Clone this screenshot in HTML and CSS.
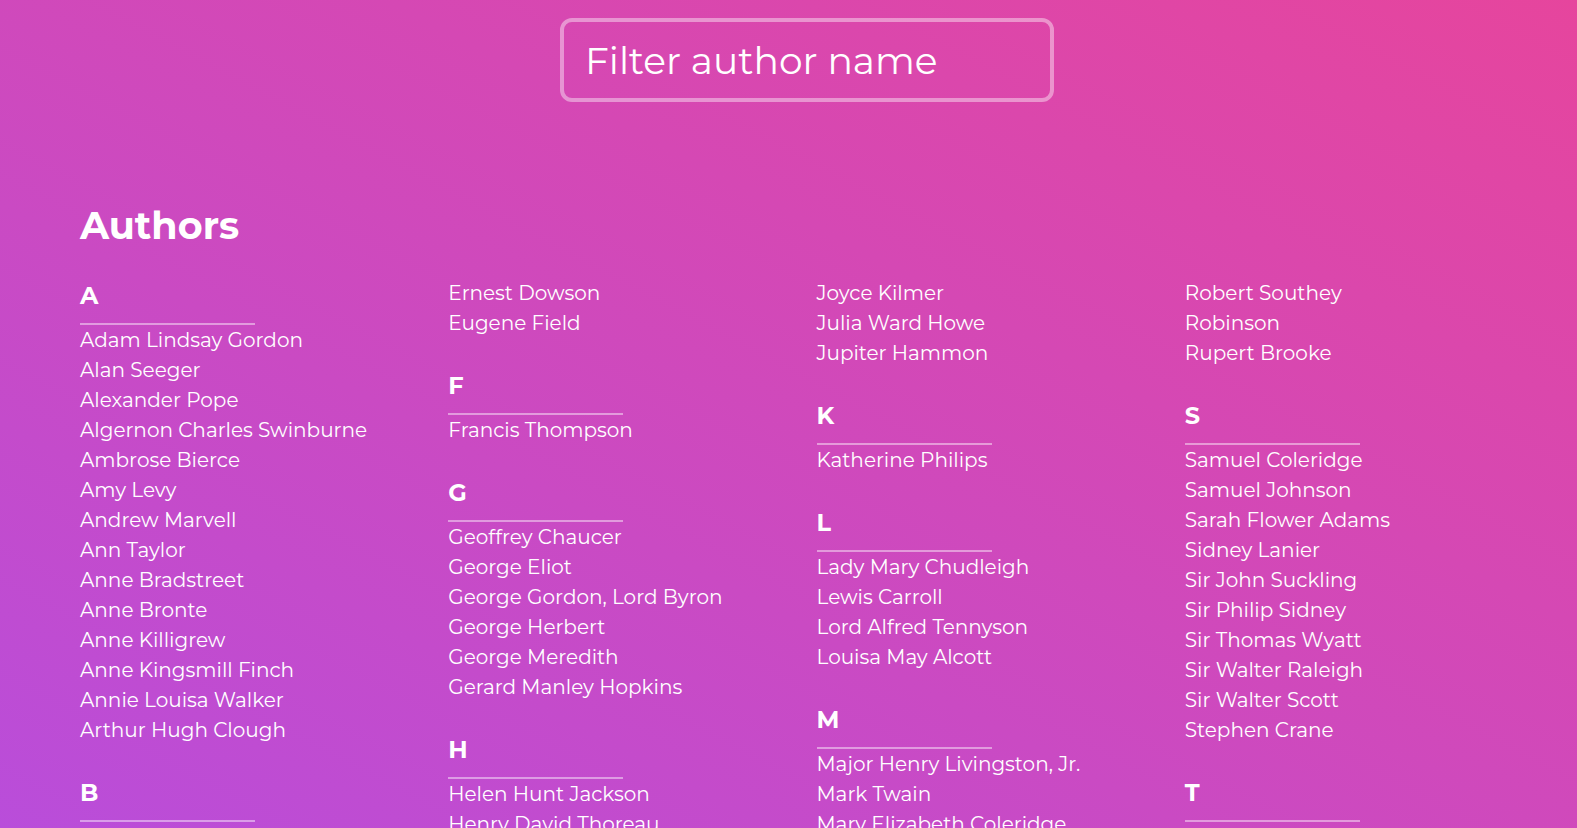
FILE: index.html
```html
<!DOCTYPE html>
<html lang="en">
<head>
<meta charset="utf-8">
<title>Authors</title>
<link rel="stylesheet" href="styles.css">
</head>
<body>
<header class="search">
  <input class="search-input" type="text" placeholder="Filter author name">
</header>
<main class="authors">
  <h1 class="authors-title">Authors</h1>
  <div class="columns">
    <div class="col">
      <section class="group">
        <h2 class="letter">A</h2>
        <ul class="names">
          <li>Adam Lindsay Gordon</li>
          <li>Alan Seeger</li>
          <li>Alexander Pope</li>
          <li>Algernon Charles Swinburne</li>
          <li>Ambrose Bierce</li>
          <li>Amy Levy</li>
          <li>Andrew Marvell</li>
          <li>Ann Taylor</li>
          <li>Anne Bradstreet</li>
          <li>Anne Bronte</li>
          <li>Anne Killigrew</li>
          <li>Anne Kingsmill Finch</li>
          <li>Annie Louisa Walker</li>
          <li>Arthur Hugh Clough</li>
        </ul>
      </section>
      <section class="group">
        <h2 class="letter">B</h2>
        <ul class="names">
          <li>Ben Jonson</li>
          <li>Bret Harte</li>
        </ul>
      </section>
      <section class="group">
        <h2 class="letter">C</h2>
        <ul class="names">
          <li>Charles Kingsley</li>
          <li>Christina Rossetti</li>
        </ul>
      </section>
      <section class="group">
        <h2 class="letter">E</h2>
        <ul class="names">
          <li>Edgar Allan Poe</li>
          <li>Emily Dickinson</li>
        </ul>
      </section>
    </div>
    <div class="col">
      <section class="group">
        <ul class="names">
          <li>Ernest Dowson</li>
          <li>Eugene Field</li>
        </ul>
      </section>
      <section class="group">
        <h2 class="letter">F</h2>
        <ul class="names">
          <li>Francis Thompson</li>
        </ul>
      </section>
      <section class="group">
        <h2 class="letter">G</h2>
        <ul class="names">
          <li>Geoffrey Chaucer</li>
          <li>George Eliot</li>
          <li>George Gordon, Lord Byron</li>
          <li>George Herbert</li>
          <li>George Meredith</li>
          <li>Gerard Manley Hopkins</li>
        </ul>
      </section>
      <section class="group">
        <h2 class="letter">H</h2>
        <ul class="names">
          <li>Helen Hunt Jackson</li>
          <li>Henry David Thoreau</li>
          <li>Henry Wadsworth Longfellow</li>
        </ul>
      </section>
    </div>
    <div class="col">
      <section class="group">
        <ul class="names">
          <li>Joyce Kilmer</li>
          <li>Julia Ward Howe</li>
          <li>Jupiter Hammon</li>
        </ul>
      </section>
      <section class="group">
        <h2 class="letter">K</h2>
        <ul class="names">
          <li>Katherine Philips</li>
        </ul>
      </section>
      <section class="group">
        <h2 class="letter">L</h2>
        <ul class="names">
          <li>Lady Mary Chudleigh</li>
          <li>Lewis Carroll</li>
          <li>Lord Alfred Tennyson</li>
          <li>Louisa May Alcott</li>
        </ul>
      </section>
      <section class="group">
        <h2 class="letter">M</h2>
        <ul class="names">
          <li>Major Henry Livingston, Jr.</li>
          <li>Mark Twain</li>
          <li>Mary Elizabeth Coleridge</li>
          <li>Matthew Arnold</li>
        </ul>
      </section>
    </div>
    <div class="col">
      <section class="group">
        <ul class="names">
          <li>Robert Southey</li>
          <li>Robinson</li>
          <li>Rupert Brooke</li>
        </ul>
      </section>
      <section class="group">
        <h2 class="letter">S</h2>
        <ul class="names">
          <li>Samuel Coleridge</li>
          <li>Samuel Johnson</li>
          <li>Sarah Flower Adams</li>
          <li>Sidney Lanier</li>
          <li>Sir John Suckling</li>
          <li>Sir Philip Sidney</li>
          <li>Sir Thomas Wyatt</li>
          <li>Sir Walter Raleigh</li>
          <li>Sir Walter Scott</li>
          <li>Stephen Crane</li>
        </ul>
      </section>
      <section class="group">
        <h2 class="letter">T</h2>
        <ul class="names">
          <li>Thomas Campbell</li>
          <li>Thomas Hardy</li>
        </ul>
      </section>
    </div>
  </div>
</main>
</body>
</html>
```
FILE: styles.css
```css
html {
  min-height: 100%;
  background: linear-gradient(to top right, #b94dda 0%, #e6459d 100%);
  background-attachment: fixed;
}

body {
  margin: 0;
  color: #ffffff;
  font-family: "Montserrat", "Inter", "Noto Sans", sans-serif;
}

.search {
  display: flex;
  justify-content: center;
  padding: 18px 0 0 37px;
}

.search-input {
  box-sizing: border-box;
  width: 494px;
  height: 84px;
  padding: 0 21px;
  border: 4px solid rgba(255, 255, 255, 0.42);
  border-radius: 12px;
  background: transparent;
  color: #ffffff;
  font-family: inherit;
  font-size: 37.6px;
  font-weight: 400;
  outline: none;
}

.search-input::placeholder {
  color: #ffffff;
  opacity: 1;
}

.authors {
  padding: 101px 80px 0;
}

.authors-title {
  margin: 0;
  font-size: 38px;
  line-height: 46px;
  font-weight: 700;
}

.columns {
  display: grid;
  grid-template-columns: repeat(4, 1fr);
  column-gap: 56px;
  margin-top: 29px;
}

.group + .group {
  margin-top: 30px;
}

.letter {
  width: 175px;
  margin: 0;
  padding: 1px 0 10px;
  border-bottom: 2px solid rgba(255, 255, 255, 0.45);
  font-size: 24px;
  line-height: 34px;
  font-weight: 700;
}

.names {
  margin: 0;
  padding: 0;
  list-style: none;
}

.names li {
  font-size: 20px;
  line-height: 30px;
  font-weight: 400;
  white-space: nowrap;
}
```
